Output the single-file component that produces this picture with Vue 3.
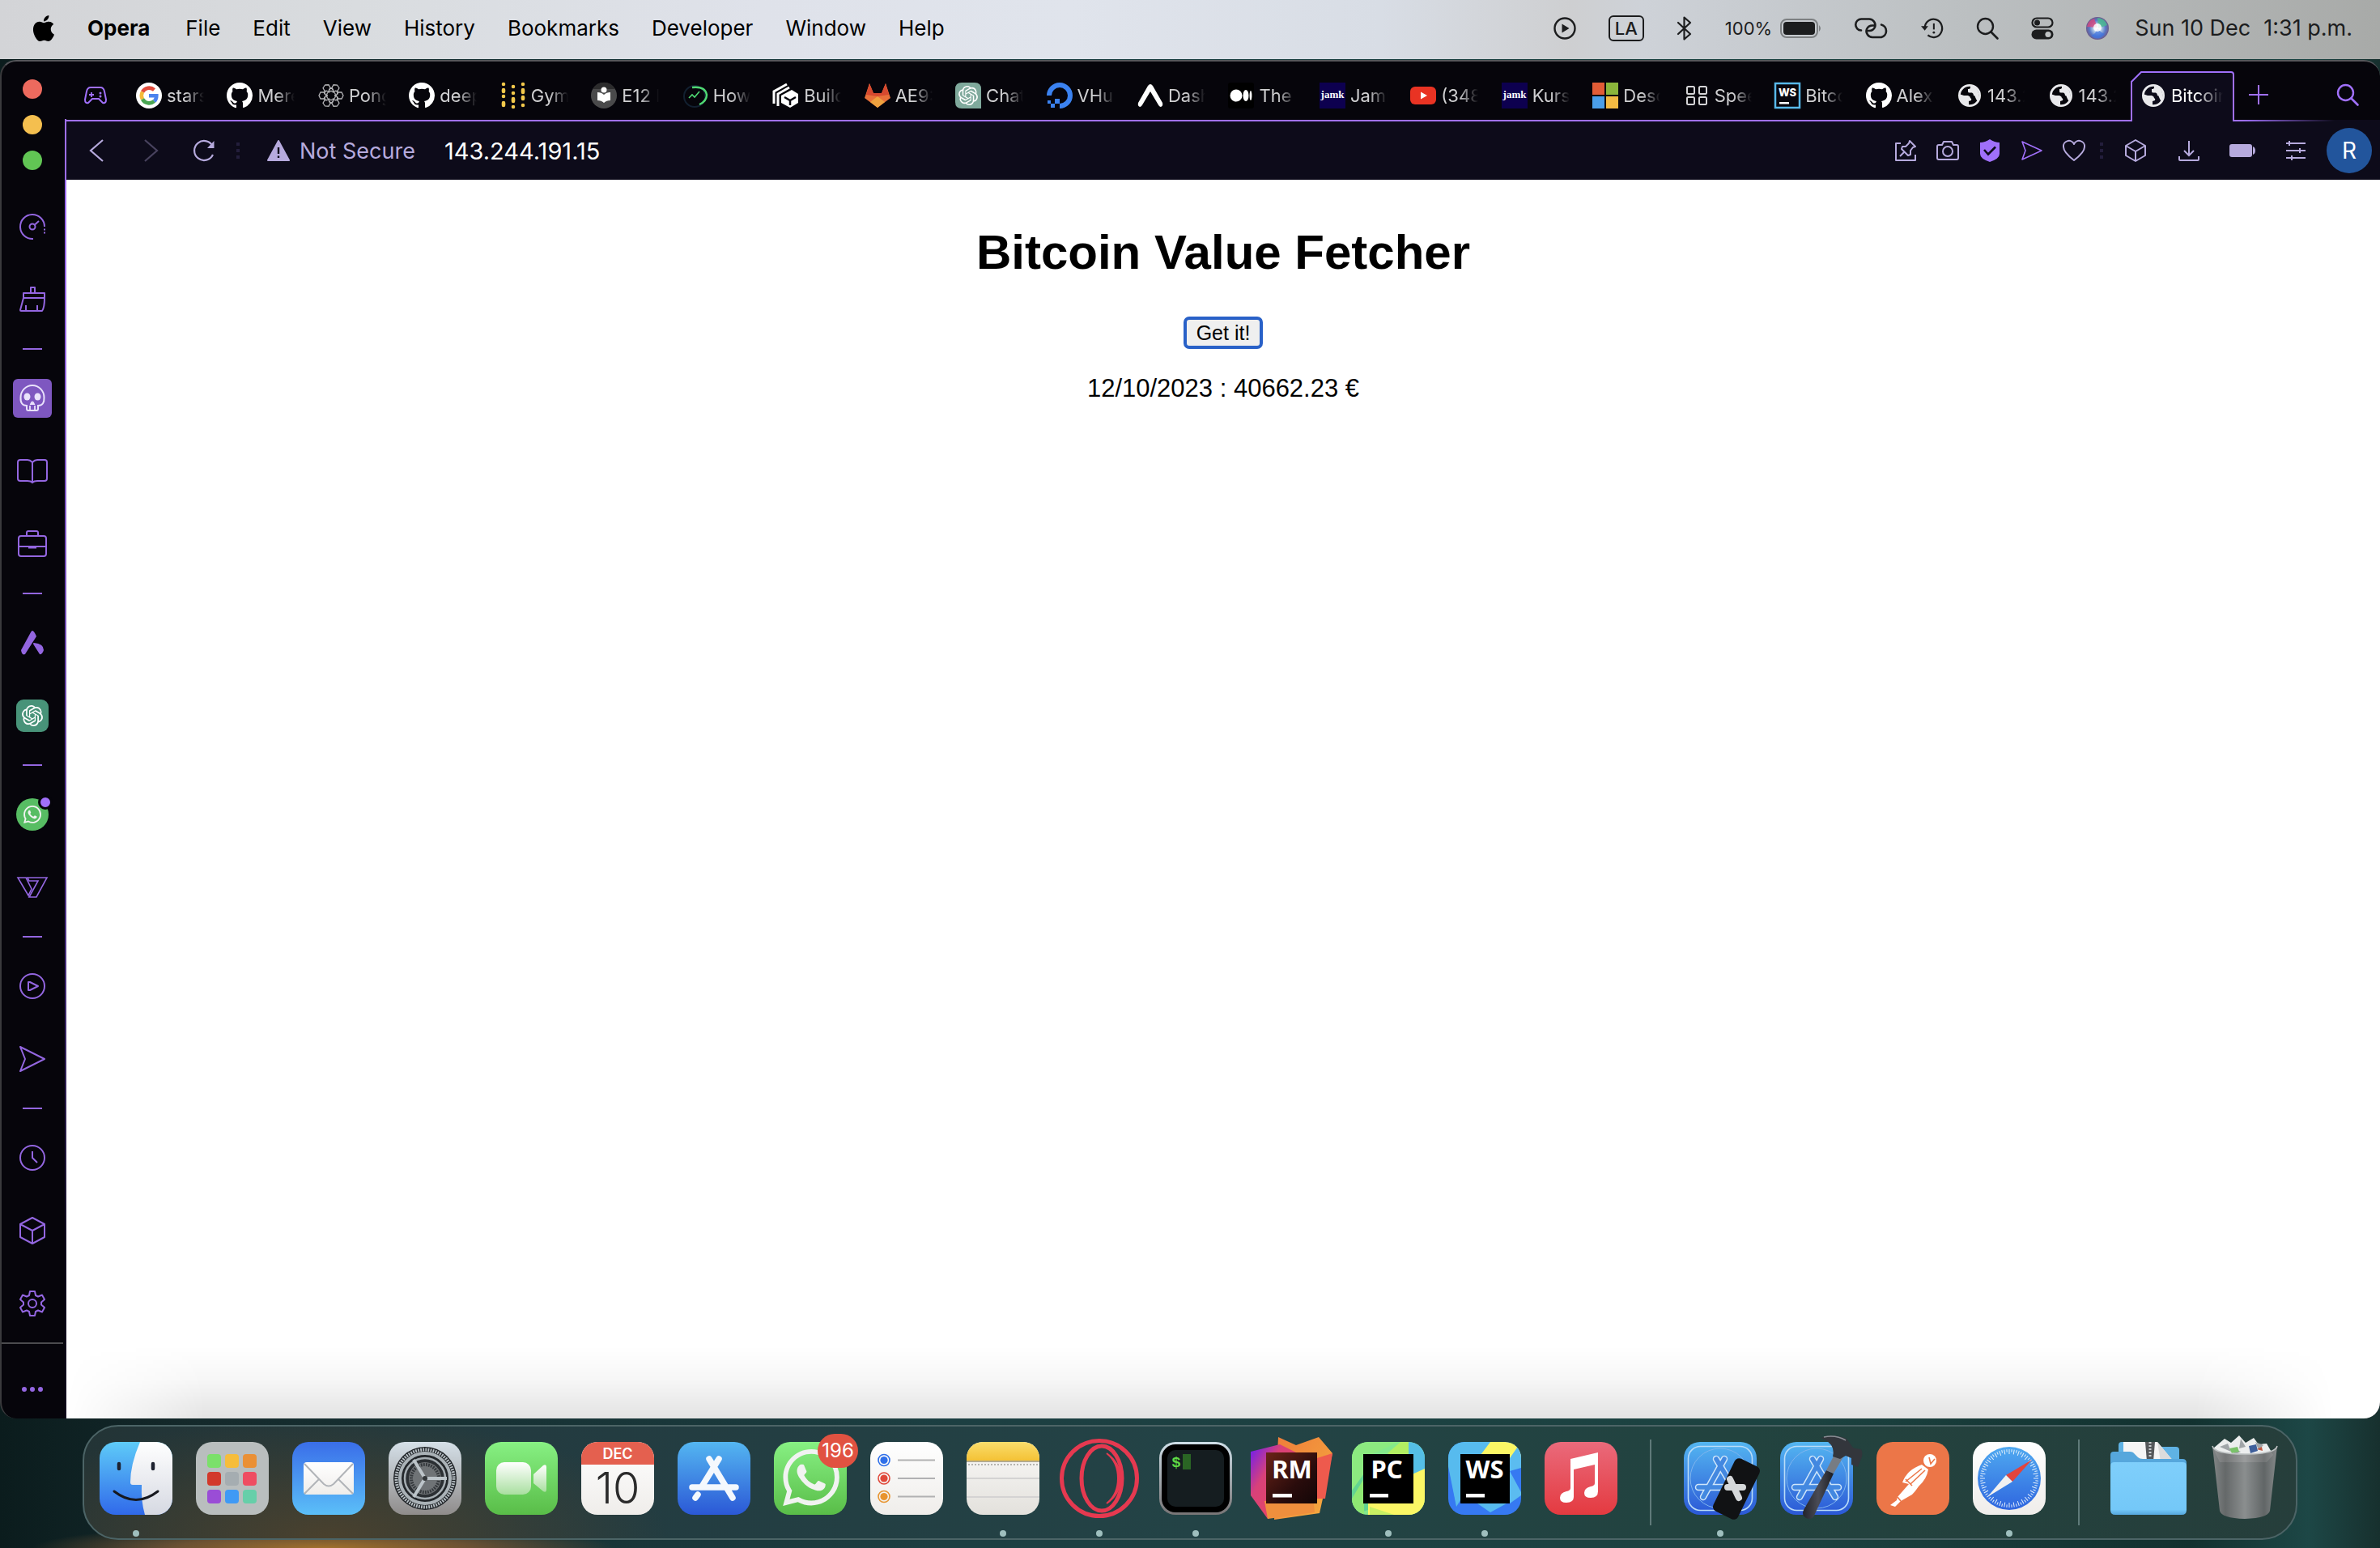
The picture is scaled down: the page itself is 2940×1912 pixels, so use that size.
<script setup>
const menus = ['File', 'Edit', 'View', 'History', 'Bookmarks', 'Developer', 'Window', 'Help']

const tabs = [
  { icon: 'google', title: 'stars' },
  { icon: 'github', title: 'Mere' },
  { icon: 'lattice', title: 'Pong' },
  { icon: 'github', title: 'deep' },
  { icon: 'gym', title: 'Gym' },
  { icon: 'reader', title: 'E12 I' },
  { icon: 'trend', title: 'How' },
  { icon: 'unity', title: 'Build' },
  { icon: 'gitlab', title: 'AE9:' },
  { icon: 'gpt-tab', title: 'Chat' },
  { icon: 'ocean', title: 'VHu' },
  { icon: 'expo', title: 'Dash' },
  { icon: 'medium', title: 'The' },
  { icon: 'jamk', title: 'Jaml' },
  { icon: 'youtube', title: '(348' },
  { icon: 'jamk', title: 'Kurs' },
  { icon: 'microsoft', title: 'Desc' },
  { icon: 'grid', title: 'Spee' },
  { icon: 'ws-tab', title: 'Bitco' },
  { icon: 'github', title: 'Alex-' },
  { icon: 'globe', title: '143.2' },
  { icon: 'globe', title: '143.2' }
]

const sans = 'Inter, sans-serif'
const noto = "'Noto Sans', sans-serif"
const marks = {
  jamk: [{ text: 'jamk', x: 16, y: 19, size: 13, weight: 700, family: "'Liberation Serif', serif", fill: '#fff' }],
  'ws-tab': [{ text: 'WS', x: 16, y: 17, size: 13, weight: 800, family: sans, fill: '#fff' }],
  calendar: [
    { text: 'DEC', x: 45, y: 21, size: 18, weight: 600, family: sans, fill: '#fff' },
    { text: '10', x: 45, y: 76, size: 54, weight: 300, family: sans, fill: '#2b2b2b' }
  ],
  terminal: [{ text: '$', x: 21, y: 31, size: 19, weight: 700, family: "'Liberation Mono', monospace", fill: '#5fd845' }],
  rubymine: [{ text: 'RM', x: 45, y: 45, size: 31, weight: 700, family: noto, fill: '#fff' }],
  pycharm: [{ text: 'PC', x: 43, y: 45, size: 31, weight: 700, family: noto, fill: '#fff' }],
  webstorm: [{ text: 'WS', x: 45, y: 45, size: 31, weight: 700, family: noto, fill: '#fff' }]
}

const sideGroups = [
  [{ icon: 'speed', label: 'Speed Dial' }, { icon: 'brush', label: 'GX Cleaner' }],
  [{ icon: 'skull', label: 'GX Mods' }, { icon: 'book', label: 'Reader' }, { icon: 'case', label: 'Workspace' }],
  [{ icon: 'aria', label: 'Aria' }, { icon: 'gpt-side', label: 'ChatGPT' }],
  [{ icon: 'wa-side', label: 'WhatsApp', badge: true }, { icon: 'veed', label: 'Vectors' }],
  [{ icon: 'player', label: 'Player' }, { icon: 'send', label: 'My Flow' }],
  [{ icon: 'clock', label: 'History' }, { icon: 'cube', label: 'Extensions' }, { icon: 'gear', label: 'Settings' }]
]

const addressTools = [
  { icon: 'pin', label: 'Pin page' },
  { icon: 'camera', label: 'Snapshot' },
  { icon: 'shield', label: 'Ad blocker', accent: true },
  { icon: 'plane', label: 'Send to My Flow', accent: true },
  { icon: 'heart', label: 'Bookmark' }
]
const browserTools = [
  { icon: 'box', label: 'Extensions' },
  { icon: 'download', label: 'Downloads' },
  { icon: 'battery', label: 'Battery saver' },
  { icon: 'sliders', label: 'Easy setup' }
]

const dock = [
  { icon: 'finder', label: 'Finder', open: true },
  { icon: 'launchpad', label: 'Launchpad' },
  { icon: 'mail', label: 'Mail' },
  { icon: 'prefs', label: 'System Settings' },
  { icon: 'facetime', label: 'FaceTime' },
  { icon: 'calendar', label: 'Calendar' },
  { icon: 'appstore', label: 'App Store' },
  { icon: 'whatsapp', label: 'WhatsApp', badge: '196' },
  { icon: 'reminders', label: 'Reminders' },
  { icon: 'notes', label: 'Notes', open: true },
  { icon: 'opera', label: 'Opera', open: true },
  { icon: 'terminal', label: 'Terminal', open: true },
  { icon: 'rubymine', label: 'RubyMine' },
  { icon: 'pycharm', label: 'PyCharm', open: true },
  { icon: 'webstorm', label: 'WebStorm', open: true },
  { icon: 'music', label: 'Music' },
  null,
  { icon: 'simulator', label: 'Simulator', open: true },
  { icon: 'xcode', label: 'Xcode' },
  { icon: 'postman', label: 'Postman' },
  { icon: 'safari', label: 'Safari', open: true },
  null,
  { icon: 'folder', label: 'Downloads' },
  { icon: 'trash', label: 'Bin' }
]

const launchColors = ['#7be06a', '#f6bd3b', '#ea9035', '#d2392b', '#a5adb1', '#ef4d62', '#9a4dd6', '#3f9af5', '#66cfa9']
const ticks = (n) => Array.from({ length: n }, (_, i) => (i * 360) / n)
</script>

<template>
  <div class="desktop">
    <svg class="sprite" width="0" height="0" aria-hidden="true">
      <defs>
        <linearGradient id="gFinder" x1="0" y1="0" x2="0" y2="1"><stop offset="0" stop-color="#5ecbf8" /><stop offset="1" stop-color="#3069ea" /></linearGradient>
        <linearGradient id="gWhite" x1="0" y1="0" x2="0" y2="1"><stop offset="0" stop-color="#fff" /><stop offset="1" stop-color="#d6d9e2" /></linearGradient>
        <linearGradient id="gPaper" x1="0" y1="0" x2="0" y2="1"><stop offset="0" stop-color="#fff" /><stop offset="1" stop-color="#efedea" /></linearGradient>
        <linearGradient id="gMail" x1="0" y1="0" x2="0" y2="1"><stop offset="0" stop-color="#3a6ee9" /><stop offset="1" stop-color="#5bbff8" /></linearGradient>
        <linearGradient id="gPrefs" x1="0" y1="0" x2="0" y2="1"><stop offset="0" stop-color="#d5e0e8" /><stop offset="1" stop-color="#8f8c8b" /></linearGradient>
        <linearGradient id="gGreen" x1="0" y1="0" x2="0" y2="1"><stop offset="0" stop-color="#87f083" /><stop offset="1" stop-color="#59bd48" /></linearGradient>
        <linearGradient id="gCam" x1="0" y1="0" x2="0" y2="1"><stop offset="0" stop-color="#fff" /><stop offset="1" stop-color="#a9dfa0" /></linearGradient>
        <linearGradient id="gStore" x1="0" y1="0" x2="0" y2="1"><stop offset="0" stop-color="#54b6f1" /><stop offset="1" stop-color="#2b58d6" /></linearGradient>
        <linearGradient id="gMusic" x1="0" y1="0" x2="0" y2="1"><stop offset="0" stop-color="#ea6a7b" /><stop offset="1" stop-color="#e43a40" /></linearGradient>
        <linearGradient id="gYellow" x1="0" y1="0" x2="0" y2="1"><stop offset="0" stop-color="#fadd6c" /><stop offset="1" stop-color="#f4c235" /></linearGradient>
        <linearGradient id="gNotes" x1="0" y1="0" x2="0" y2="1"><stop offset="0" stop-color="#faf9f8" /><stop offset="1" stop-color="#e3e1dc" /></linearGradient>
        <linearGradient id="gRuby" x1="0" y1="0" x2="1" y2="1"><stop offset="0" stop-color="#6a1cf5" /><stop offset=".35" stop-color="#d8417a" /><stop offset="1" stop-color="#ef4a55" /></linearGradient>
        <linearGradient id="gOrange" x1="0" y1="0" x2="1" y2="1"><stop offset="0" stop-color="#ee7d3a" /><stop offset="1" stop-color="#f6ad3f" /></linearGradient>
        <linearGradient id="gRm" x1="0" y1="0" x2="1" y2="1"><stop offset="0" stop-color="#6b2317" /><stop offset=".6" stop-color="#2a0c0c" /><stop offset="1" stop-color="#120607" /></linearGradient>
        <linearGradient id="gTerm" x1="0" y1="0" x2="0" y2="1"><stop offset="0" stop-color="#cfdfe8" /><stop offset="1" stop-color="#777475" /></linearGradient>
        <linearGradient id="gSafari" x1="0" y1="0" x2="0" y2="1"><stop offset="0" stop-color="#4fa9f0" /><stop offset="1" stop-color="#2f66df" /></linearGradient>
        <linearGradient id="gTrash" x1="0" y1="0" x2="1" y2="0"><stop offset="0" stop-color="#8b8d8e" /><stop offset=".2" stop-color="#6a6c6d" /><stop offset=".5" stop-color="#939596" /><stop offset=".8" stop-color="#66696a" /><stop offset="1" stop-color="#8f9192" /></linearGradient>
        <linearGradient id="gFolder" x1="0" y1="0" x2="0" y2="1"><stop offset="0" stop-color="#7fcffb" /><stop offset=".9" stop-color="#74c8f8" /><stop offset="1" stop-color="#55a6dc" /></linearGradient>
        <linearGradient id="gHammer" x1="0" y1="0" x2="1" y2="0"><stop offset="0" stop-color="#22232a" /><stop offset=".5" stop-color="#4a4c56" /><stop offset="1" stop-color="#1c1d22" /></linearGradient>
        <radialGradient id="gSiri"><stop offset="0" stop-color="#fff" /><stop offset=".35" stop-color="#b9cfe8" /><stop offset=".7" stop-color="#5a7bc8" /><stop offset="1" stop-color="#6a5a8c" /></radialGradient>
        <clipPath id="cTile"><rect width="90" height="90" rx="20" /></clipPath>
      </defs>

      <!-- menu bar -->
      <symbol id="apple" viewBox="0 0 24 24"><path d="M12.152 6.896c-.948 0-2.415-1.078-3.960-1.040-2.040.027-3.910 1.183-4.961 3.014-2.117 3.675-.546 9.103 1.519 12.090 1.013 1.454 2.208 3.090 3.792 3.039 1.520-.065 2.090-.987 3.935-.987 1.831 0 2.350.987 3.960.948 1.637-.026 2.676-1.480 3.676-2.948 1.156-1.688 1.636-3.325 1.662-3.415-.039-.013-3.182-1.221-3.220-4.857-.026-3.040 2.480-4.494 2.597-4.559-1.429-2.090-3.623-2.324-4.390-2.376-2-.156-3.675 1.090-4.610 1.090zM15.530 3.830c.843-1.012 1.400-2.427 1.245-3.830-1.207.052-2.662.805-3.532 1.818-.780.896-1.454 2.338-1.273 3.714 1.338.104 2.715-.688 3.559-1.701" /></symbol>
      <symbol id="playing" viewBox="0 0 28 28"><circle cx="14" cy="14" r="12.500" fill="none" stroke="currentColor" stroke-width="2.400" /><path d="M10.500 8.500v11l9-5.500z" fill="currentColor" /></symbol>
      <symbol id="bluetooth" viewBox="0 0 20 30"><path d="M2 8l15 14-7.500 6.500V1.500L17 8 2 22" fill="none" stroke="currentColor" stroke-width="2.200" stroke-linejoin="round" stroke-linecap="round" /></symbol>
      <symbol id="charge" viewBox="0 0 52 24"><rect x="1" y="1" width="45" height="22" rx="7" fill="none" stroke="#7d8082" stroke-width="2" /><rect x="4" y="4" width="39" height="16" rx="4" fill="currentColor" /><path d="M48 8q4 4 0 8z" fill="#7d8082" /></symbol>
      <symbol id="link" viewBox="0 0 42 26"><g fill="none" stroke="currentColor" stroke-width="2.600" stroke-linecap="round"><path d="M8 15.500A7 7 0 0 1 8.500 1.500H18a7.500 7.500 0 0 1 7 10q-2 4.500-7 4.500h-1" /><path d="M33 8.500a8 8 0 0 1 0 15.500H22a7.500 7.500 0 0 1-7-10q2-4.500 7-4.500h2" /></g></symbol>
      <symbol id="timemachine" viewBox="0 0 30 28"><path d="M5 13A11.500 12 0 1 1 9 23" fill="none" stroke="currentColor" stroke-width="2.400" /><path d="M0 11h9.500L5 17z" fill="currentColor" /><path d="M17 7.500v8" stroke="currentColor" stroke-width="2.200" /><circle cx="17" cy="19.500" r="1.500" fill="currentColor" /></symbol>
      <symbol id="search" viewBox="0 0 28 28"><circle cx="11.500" cy="11.500" r="9.500" fill="none" stroke="currentColor" stroke-width="2.400" /><path d="M18.500 18.500l8 8" stroke="currentColor" stroke-width="2.600" stroke-linecap="round" /></symbol>
      <symbol id="controls" viewBox="0 0 28 28"><rect x="1.500" y="1.500" width="25" height="11" rx="5.500" fill="none" stroke="currentColor" stroke-width="2.200" /><circle cx="7.500" cy="7" r="3.500" fill="currentColor" /><rect x="0.500" y="15.500" width="27" height="12" rx="6" fill="currentColor" /><circle cx="21" cy="21.500" r="3.600" fill="#bfc2c3" /></symbol>
      <symbol id="siri" viewBox="0 0 28 28"><circle cx="14" cy="14" r="14" fill="url(#gSiri)" /><path d="M1 12A13 13 0 0 1 10 2l4 11z" fill="#d8467c" opacity=".8" /><path d="M14 1a13 13 0 0 1 12 9l-11 4z" fill="#4ab890" opacity=".85" /><path d="M6 23q6-2 8-9 5 6 9 7-8 10-17 2" fill="#3f74e0" opacity=".7" /><circle cx="14" cy="13" r="5" fill="#fff" opacity=".85" /></symbol>

      <!-- tab favicons -->
      <symbol id="gamepad" viewBox="0 0 28 24"><path d="M8 2h12q4 0 5 5l2 10q0 5-4 4l-5-5h-8l-5 5q-4 1-4-4L3 7q1-5 5-5z" fill="none" stroke="currentColor" stroke-width="2" stroke-linejoin="round" /><path d="M9 8v6M6 11h6" stroke="currentColor" stroke-width="1.800" /><circle cx="20" cy="9" r="1.500" fill="currentColor" /><circle cx="20" cy="13" r="1.500" fill="currentColor" /></symbol>
      <symbol id="google" viewBox="0 0 32 32"><circle cx="16" cy="16" r="16" fill="#fff" /><g fill="none" stroke-width="4.600"><path d="M8 11.500A9.500 9.500 0 0 1 22.500 9" stroke="#e14b3c" /><path d="M8 20.500a9.500 9.500 0 0 1 0-9" stroke="#f4bb3a" /><path d="M22.500 23A9.500 9.500 0 0 1 8 20.500" stroke="#4aa653" /><path d="M16 16.200h9.300q0 4.500-2.800 6.800" stroke="#4b82ee" /></g></symbol>
      <symbol id="github" viewBox="0 0 16 16"><path fill="#fff" d="M8 0C3.580 0 0 3.580 0 8c0 3.540 2.290 6.530 5.470 7.590.4.070.55-.170.55-.380 0-.190-.010-.820-.010-1.490-2.010.370-2.530-.490-2.690-.940-.090-.230-.480-.980-.820-1.170-.280-.150-.680-.520-.010-.530.630-.010 1.080.580 1.230.820.720 1.210 1.870.870 2.330.660.070-.520.280-.870.510-1.070-1.780-.200-3.640-.890-3.640-3.950 0-.870.310-1.590.820-2.150-.080-.200-.360-1.020.080-2.120 0 0 .670-.210 2.200.820.640-.180 1.320-.270 2-.270s1.360.090 2 .270c1.530-1.040 2.200-.820 2.200-.820.440 1.100.160 1.920.080 2.120.510.560.820 1.270.820 2.150 0 3.070-1.870 3.750-3.650 3.950.290.250.540.730.540 1.480 0 1.070-.010 1.930-.010 2.200 0 .210.150.460.550.380A8.013 8.013 0 0016 8c0-4.420-3.580-8-8-8z" /></symbol>
      <symbol id="lattice" viewBox="0 0 32 32"><g fill="none" stroke="#b5b5b8" stroke-width="1.300"><circle cx="16" cy="16" r="5.500" /><path v-for="a in ticks(6)" :key="a" :transform="`rotate(${a + 30} 16 16)`" d="M16 1l4 2v4l-4 3-4-3V3zM12 7l-2 4M20 7l2 4M16 10v2" /></g></symbol>
      <symbol id="gym" viewBox="0 0 32 32"><g stroke="#f2c84b" stroke-linecap="round" stroke-width="4.600"><path d="M4 2v0M4 9v2M4 17v0M4 25v3M16 5v0M16 13v0M16 20v3M16 30v0M28 2v0M28 9v3M28 18v2M28 28v0" /></g></symbol>
      <symbol id="reader" viewBox="0 0 32 32"><circle cx="16" cy="16" r="16" fill="#4a4a4b" /><path d="M2 8A16 16 0 0 1 30 8z" fill="#2c2c2d" /><circle cx="16" cy="9" r="3.500" fill="#fff" /><path d="M8 12q5 0 8 3 3-3 8-3v10q-5 0-8 3-3-3-8-3z" fill="#fff" /></symbol>
      <symbol id="trend" viewBox="0 0 32 32"><circle cx="15" cy="17" r="13" fill="none" stroke="#122030" stroke-width="2" /><path d="M12 6q16-2 18 9 0 8-9 12" fill="none" stroke="#4fd873" stroke-width="2.400" /><path d="M8 19l4-4 3 3 6-7" fill="none" stroke="#4fd873" stroke-width="1.600" /></symbol>
      <symbol id="unity" viewBox="0 0 32 32"><path d="M1 26V11L17 2M6 29V14L20 6" fill="none" stroke="#fff" stroke-width="3" /><path d="M10 16l13-7 8 5v11l-10 6-11-6z" fill="#fff" /><path d="M14 18l7 4 7-4M21 22v6" stroke="#07060d" stroke-width="2.500" fill="none" /></symbol>
      <symbol id="gitlab" viewBox="0 0 32 32"><path d="M16 31L0 19 6 1l5 12h10l5-12 6 18z" fill="#e8713a" /><path d="M6 1l5 12h10l5-12 4 14-14 2L2 15z" fill="#d6492f" /><path d="M16 31l-9-7 9-7 9 7z" fill="#efa23f" /></symbol>
      <symbol id="knot" viewBox="0 0 24 24"><path fill="#fff" d="M22.282 9.821a5.985 5.985 0 0 0-.516-4.911 6.046 6.046 0 0 0-6.510-2.900A6.065 6.065 0 0 0 4.981 4.182a5.985 5.985 0 0 0-3.998 2.900 6.046 6.046 0 0 0 .743 7.097 5.980 5.980 0 0 0 .511 4.911 6.051 6.051 0 0 0 6.515 2.900A5.985 5.985 0 0 0 13.260 24a6.056 6.056 0 0 0 5.772-4.206 5.989 5.989 0 0 0 3.998-2.900 6.056 6.056 0 0 0-.748-7.073zm-9.022 12.608a4.476 4.476 0 0 1-2.876-1.041l.142-.080 4.778-2.758a.795.795 0 0 0 .393-.681v-6.737l2.020 1.169a.071.071 0 0 1 .038.052v5.583a4.504 4.504 0 0 1-4.495 4.494zm-9.661-4.125a4.471 4.471 0 0 1-.535-3.014l.142.085 4.783 2.758a.771.771 0 0 0 .781 0l5.843-3.369v2.332a.080.080 0 0 1-.033.062L9.740 19.950a4.499 4.499 0 0 1-6.141-1.646zM2.341 7.896a4.485 4.485 0 0 1 2.366-1.973V11.600a.766.766 0 0 0 .388.677l5.814 3.354-2.020 1.169a.076.076 0 0 1-.071 0l-4.830-2.787A4.504 4.504 0 0 1 2.341 7.872zm16.596 3.856L13.104 8.364 15.119 7.200a.076.076 0 0 1 .071 0l4.830 2.791a4.494 4.494 0 0 1-.677 8.104v-5.677a.790.790 0 0 0-.407-.667zm2.011-3.023l-.142-.085-4.774-2.782a.776.776 0 0 0-.785 0L9.409 9.230V6.897a.066.066 0 0 1 .028-.062l4.830-2.787a4.499 4.499 0 0 1 6.680 4.660zM8.307 12.863l-2.020-1.164a.080.080 0 0 1-.038-.057V6.074a4.499 4.499 0 0 1 7.376-3.454l-.142.081L8.704 5.459a.795.795 0 0 0-.393.681zm1.098-2.365l2.602-1.500 2.607 1.500v2.999l-2.597 1.500-2.607-1.500Z" /></symbol>
      <symbol id="gpt-tab" viewBox="0 0 32 32"><path d="M8 0h16q8 0 8 8v24H8q-8 0-8-8V8q0-8 8-8z" fill="#7fa99c" /><use href="#knot" x="4" y="4" width="24" height="24" /></symbol>
      <symbol id="ocean" viewBox="0 0 32 32"><path d="M3 16A13 13 0 1 1 16 29" fill="none" stroke="#3b82f0" stroke-width="6" /><path d="M10 20h6v6h-6zM5 26h5v5H5zM1 22h4v4H1z" fill="#3b82f0" /></symbol>
      <symbol id="expo" viewBox="0 0 32 32"><path d="M13 4q3-4 6 0l12 21q1 4-2 5-2 0-4-4L16 11 7 26q-2 4-4 4-3-1-2-5z" fill="#fff" /></symbol>
      <symbol id="medium" viewBox="0 0 32 32"><rect width="32" height="32" rx="3" fill="#000" /><circle cx="10" cy="16" r="7.500" fill="#fff" /><ellipse cx="22" cy="16" rx="3.500" ry="7" fill="#fff" /><ellipse cx="28" cy="16" rx="1.400" ry="6" fill="#fff" /></symbol>
      <symbol id="jamk" viewBox="0 0 32 32"><rect width="32" height="32" fill="#0d004f" /></symbol>
      <symbol id="youtube" viewBox="0 0 32 32"><rect y="5" width="32" height="22" rx="6" fill="#e93323" /><path d="M13 11.500v9l8-4.500z" fill="#fff" /></symbol>
      <symbol id="microsoft" viewBox="0 0 32 32"><path d="M0 0h15v15H0z" fill="#e15c36" /><path d="M17 0h15v15H17z" fill="#8bb63b" /><path d="M0 17h15v15H0z" fill="#4a9ee8" /><path d="M17 17h15v15H17z" fill="#f3bb43" /></symbol>
      <symbol id="grid" viewBox="0 0 32 32"><g fill="none" stroke="#d4d4d6" stroke-width="2"><rect x="4" y="5" width="9" height="9" rx="1.500" /><rect x="19" y="5" width="9" height="9" rx="1.500" /><rect x="4" y="18" width="9" height="9" rx="1.500" /><rect x="19" y="18" width="9" height="9" rx="1.500" /></g></symbol>
      <symbol id="ws-tab" viewBox="0 0 32 32"><rect x="1" y="1" width="30" height="30" fill="#07060d" stroke="#58b9ea" stroke-width="2.500" /><path d="M6 24h12v2.500H6z" fill="#fff" /></symbol>
      <symbol id="globe" viewBox="0 0 32 32"><circle cx="16" cy="16" r="12.600" fill="none" stroke="#e9e9ec" stroke-width="2.800" /><path d="M17 3v3q0 2-3 2v3q0 1.500 2 1.500h3q2 .500 2 3.500 2 0 2 2 1 3 3 5A14 14 0 0 0 17 3z" fill="#e9e9ec" /><path d="M3 14l6 2h5q3 1 3 3 2 1 1 3l-3 1v6A13 13 0 0 1 3 14z" fill="#e9e9ec" /></symbol>
      <symbol id="plus" viewBox="0 0 24 24"><path d="M12 0v24M0 12h24" stroke="currentColor" stroke-width="2" /></symbol>

      <!-- toolbar -->
      <symbol id="back" viewBox="0 0 28 28"><path d="M21 1L6 14l15 13" fill="none" stroke="currentColor" stroke-width="2.200" /></symbol>
      <symbol id="forward" viewBox="0 0 28 28"><path d="M7 1l15 13L7 27" fill="none" stroke="currentColor" stroke-width="2.200" /></symbol>
      <symbol id="reload" viewBox="0 0 28 28"><path d="M25 19A12 12 0 1 1 25 9" fill="none" stroke="currentColor" stroke-width="2.200" /><path d="M26.500 2v9H18z" fill="currentColor" /></symbol>
      <symbol id="warn" viewBox="0 0 28 26"><path d="M14 1l13 24H1z" fill="currentColor" stroke="currentColor" stroke-width="2" stroke-linejoin="round" /><path d="M14 9v8M14 19.500v2.500" stroke="#0d0b1a" stroke-width="2.400" /></symbol>
      <symbol id="pin" viewBox="0 0 28 28"><g fill="none" stroke="currentColor" stroke-width="2" stroke-linejoin="round"><path d="M8 5H2v21h24v-7" /><path d="M19 2l7 7-3 1-3 4v5l-3 1-8-8 1-3h4l4-4zM13 15l-6 6" /></g></symbol>
      <symbol id="camera" viewBox="0 0 28 28"><g fill="none" stroke="currentColor" stroke-width="2" stroke-linejoin="round"><path d="M3 7h4l2-4h10l2 4h4q2 0 2 2v14q0 2-2 2H3q-2 0-2-2V9q0-2 2-2z" /><circle cx="14" cy="15" r="6" /></g></symbol>
      <symbol id="shield" viewBox="0 0 28 28"><path d="M14 0q6 4 12 4v14q0 6-12 10Q2 24 2 18V4q6 0 12-4z" fill="currentColor" /><path d="M7 13l5 5.500L21 9.500" fill="none" stroke="#0d0b1a" stroke-width="2.600" /></symbol>
      <symbol id="plane" viewBox="0 0 28 28"><path d="M2 3l24 11L2 25l4-11z" fill="none" stroke="currentColor" stroke-width="1.600" stroke-linejoin="round" /></symbol>
      <symbol id="heart" viewBox="0 0 28 28"><path d="M14 26Q1 16 1 9.500A6.800 6.800 0 0 1 14 6a6.800 6.800 0 0 1 13 3.500Q27 16 14 26z" fill="none" stroke="currentColor" stroke-width="2" stroke-linejoin="round" /></symbol>
      <symbol id="box" viewBox="0 0 32 32"><g fill="none" stroke="currentColor" stroke-width="2" stroke-linejoin="round"><path d="M16 3l12 7v12l-12 7-12-7V10zM4 10l12 7 12-7M16 17v12" /></g></symbol>
      <symbol id="download" viewBox="0 0 32 32"><path d="M16 4v18M10 16l6 6 6-6M4 23v4q0 1 1 1h22q1 0 1-1v-4" fill="none" stroke="currentColor" stroke-width="2" /></symbol>
      <symbol id="battery" viewBox="0 0 32 28"><rect x="0" y="6" width="28" height="16" rx="3" fill="currentColor" /><path d="M29 9q3 1 3 5t-3 5z" fill="currentColor" /></symbol>
      <symbol id="sliders" viewBox="0 0 32 32"><path d="M4 7h24M4 16h24M4 25h24M8 4v6M21 13v6M11 22v6" fill="none" stroke="currentColor" stroke-width="2" /></symbol>

      <!-- sidebar -->
      <symbol id="speed" viewBox="0 0 40 40"><g fill="none" stroke="currentColor" stroke-width="2"><path d="M21 35A15 15 0 1 1 35 20" /><circle cx="20" cy="20" r="3.500" /><path d="M23 17.500l5-4.500M35 22.500v2M35 26.500v2" /></g></symbol>
      <symbol id="brush" viewBox="0 0 40 40"><g fill="none" stroke="currentColor" stroke-width="2" stroke-linejoin="round"><path d="M18 12V5h5v7M9 18v-6h26v6zM9 18L5 33q0 1 1 1h26q3-4 3-16M12 33v-6M26 33v-6" /></g></symbol>
      <symbol id="skull" viewBox="0 0 40 40"><rect x="-4" y="-4" width="48" height="48" rx="6" fill="#7e57c0" /><path d="M13 33v-4q-8 0-7.500-10A14.500 15 0 0 1 34.500 19q.500 10-7.500 10v4q0 2-2 2H15q-2 0-2-2z" fill="none" stroke="#e9e2fb" stroke-width="2" /><ellipse cx="13.500" cy="18" rx="4" ry="4.600" fill="#e9e2fb" /><ellipse cx="26.500" cy="18" rx="4" ry="4.600" fill="#e9e2fb" /><path d="M18 27q2-5 4 0zM17 34v-5M23 34v-5" fill="none" stroke="#e9e2fb" stroke-width="1.800" /></symbol>
      <symbol id="book" viewBox="0 0 40 40"><path d="M20 9q-3-3-6-3H5q-3 0-3 3v20q0 3 3 3h9q4 0 6 2 2-2 6-2h9q3 0 3-3V9q0-3-3-3h-9q-3 0-6 3zv25" fill="none" stroke="currentColor" stroke-width="2" /></symbol>
      <symbol id="case" viewBox="0 0 40 40"><g fill="none" stroke="currentColor" stroke-width="2"><rect x="3" y="10" width="34" height="25" rx="3" /><path d="M13 10V6q0-2 2-2h10q2 0 2 2v4M3 23h34" /></g><path d="M15 24h10v1.500H15z" fill="currentColor" /></symbol>
      <symbol id="aria" viewBox="0 0 40 40"><path d="M20 5q2 0 5 7L11 34q-4 2-5-5L18 7q1-2 2-2zM22 20q12 1 12 9-2 6-5 5l-7-11q-2-3 0-3z" fill="currentColor" /></symbol>
      <symbol id="gpt-side" viewBox="0 0 40 40"><rect width="40" height="40" rx="9" fill="#489379" /><use href="#knot" x="7" y="7" width="26" height="26" /></symbol>
      <symbol id="wa" viewBox="0 0 24 24"><path fill="#f1f3f1" d="M17.472 14.382c-.297-.149-1.758-.867-2.030-.967-.273-.099-.471-.148-.670.150-.197.297-.767.966-.940 1.164-.173.199-.347.223-.644.075-.297-.150-1.255-.463-2.390-1.475-.883-.788-1.480-1.761-1.653-2.059-.173-.297-.018-.458.130-.606.134-.133.298-.347.446-.520.149-.174.198-.298.298-.497.099-.198.050-.371-.025-.520-.075-.149-.669-1.612-.916-2.207-.242-.579-.487-.500-.669-.510-.173-.008-.371-.010-.570-.010-.198 0-.520.074-.792.372-.272.297-1.040 1.016-1.040 2.479 0 1.462 1.065 2.875 1.213 3.074.149.198 2.096 3.200 5.077 4.487.709.306 1.262.489 1.694.625.712.227 1.360.195 1.871.118.571-.085 1.758-.719 2.006-1.413.248-.694.248-1.289.173-1.413-.074-.124-.272-.198-.570-.347m-5.421 7.403h-.004a9.870 9.870 0 01-5.031-1.378l-.361-.214-3.741.982.998-3.648-.235-.374a9.860 9.860 0 01-1.510-5.260c.001-5.450 4.436-9.884 9.888-9.884 2.640 0 5.122 1.030 6.988 2.898a9.825 9.825 0 012.893 6.994c-.003 5.450-4.437 9.884-9.885 9.884m8.413-18.297A11.815 11.815 0 0012.050 0C5.495 0 .160 5.335.157 11.892c0 2.096.547 4.142 1.588 5.945L.057 24l6.305-1.654a11.882 11.882 0 005.683 1.448h.005c6.554 0 11.890-5.335 11.893-11.893a11.821 11.821 0 00-3.480-8.413z" /></symbol>
      <symbol id="wa-side" viewBox="0 0 40 40"><circle cx="20" cy="20" r="20" fill="#57bd63" /><use href="#wa" x="9" y="9" width="22" height="22" /></symbol>
      <symbol id="veed" viewBox="0 0 40 40"><path d="M2 8h10l7 14-4 8zM14 8h24L25 32h-9l11-20H16zM19 22l-4 8" fill="none" stroke="currentColor" stroke-width="1.600" /></symbol>
      <symbol id="player" viewBox="0 0 40 40"><g fill="none" stroke="currentColor" stroke-width="2" stroke-linejoin="round"><circle cx="20" cy="20" r="15" /><path d="M15 15v10l2 0 10-5-10-5z" /></g></symbol>
      <symbol id="send" viewBox="0 0 40 40"><path d="M5 5l30 15L5 35l6-15z" fill="none" stroke="currentColor" stroke-width="2" stroke-linejoin="round" /></symbol>
      <symbol id="clock" viewBox="0 0 40 40"><g fill="none" stroke="currentColor" stroke-width="2"><circle cx="20" cy="20" r="15" /><path d="M20 12v8l6 6" /></g></symbol>
      <symbol id="cube" viewBox="0 0 40 40"><g fill="none" stroke="currentColor" stroke-width="2" stroke-linejoin="round"><path d="M20 4l15 8v16l-15 8-15-8V12zM5 12l15 8 15-8M20 20v16" /></g></symbol>
      <symbol id="gear" viewBox="0 0 40 40"><g fill="none" stroke="currentColor" stroke-width="2" stroke-linejoin="round"><circle cx="20" cy="20" r="5" /><path d="M17 5h6l1 5 3 1.500 5-2 3 5.500-4 3.500v3l4 3.500-3 5.500-5-2-3 1.500-1 5h-6l-1-5-3-1.500-5 2L5 25l4-3.500v-3L5 15l3-5.500 5 2 3-1.500z" /></g></symbol>

      <!-- dock -->
      <symbol id="finder" viewBox="0 0 90 90"><g clip-path="url(#cTile)"><rect width="90" height="90" fill="url(#gFinder)" /><path d="M50 0Q38 28 38 50q0 3 3 3h11q-1 20 4 37h34V0z" fill="url(#gWhite)" /></g><path d="M24 27v6M66 27v6" stroke="#1d2230" stroke-width="4.500" stroke-linecap="round" /><path d="M18 61q27 21 54 0" fill="none" stroke="#16181e" stroke-width="3" stroke-linecap="round" /></symbol>
      <symbol id="launchpad" viewBox="0 0 90 90"><rect width="90" height="90" rx="20" fill="#b9bebe" /><rect v-for="(c, i) in launchColors" :key="c" :x="14 + (i % 3) * 22" :y="15 + Math.floor(i / 3) * 22" width="17" height="17" rx="4" :fill="c" /></symbol>
      <symbol id="mail" viewBox="0 0 90 90"><rect width="90" height="90" rx="20" fill="url(#gMail)" /><rect x="14" y="25" width="62" height="40" rx="4" fill="url(#gPaper)" /><path d="M15 27l24 25q6 5 12 0l24-25M15 64l18-18M75 64L57 46" fill="none" stroke="#b1b4b8" stroke-width="2" /></symbol>
      <symbol id="prefs" viewBox="0 0 90 90"><rect width="90" height="90" rx="20" fill="url(#gPrefs)" /><circle cx="45" cy="45" r="39" fill="#22262a" /><circle cx="45" cy="45" r="35.500" fill="none" stroke="#b7bfc4" stroke-width="4" stroke-dasharray="1.800 1.300" /><circle cx="45" cy="45" r="31" fill="none" stroke="#aab2b7" stroke-width="4" /><circle cx="45" cy="45" r="27" fill="#2b2f33" /><circle cx="45" cy="45" r="20" fill="#6f7376" /><circle cx="45" cy="45" r="17" fill="none" stroke="#34383c" stroke-width="4" stroke-dasharray="1.800 1.300" /><circle cx="45" cy="45" r="25" fill="none" stroke="#a5adb2" stroke-width="2.500" /><path d="M45 45h27M45 45L31 22M45 45L31 68" stroke="#bcc4c9" stroke-width="4" /><circle cx="45" cy="45" r="3" fill="#33373a" /></symbol>
      <symbol id="facetime" viewBox="0 0 90 90"><rect width="90" height="90" rx="20" fill="url(#gGreen)" /><rect x="14" y="25" width="43" height="40" rx="10" fill="url(#gCam)" /><path d="M60 40l12-11q4-2 4 2v28q0 4-4 2L60 51z" fill="url(#gCam)" /></symbol>
      <symbol id="calendar" viewBox="0 0 90 90"><g clip-path="url(#cTile)"><rect width="90" height="90" fill="url(#gPaper)" /><rect width="90" height="28" fill="#e4604f" /></g></symbol>
      <symbol id="appstore" viewBox="0 0 90 90"><rect width="90" height="90" rx="20" fill="url(#gStore)" /><g stroke="#f4f8fd" stroke-width="7.500" stroke-linecap="round"><path d="M51 21L30 55M39 21l29 48M18 56h54M25 65l-3 4" /></g></symbol>
      <symbol id="whatsapp" viewBox="0 0 90 90"><rect width="90" height="90" rx="20" fill="url(#gGreen)" /><use href="#wa" x="11" y="9" width="70" height="70" /></symbol>
      <symbol id="reminders" viewBox="0 0 90 90"><rect width="90" height="90" rx="20" fill="url(#gPaper)" /><g v-for="(c, i) in ['#2f6fe9', '#e0483a', '#e8942f']" :key="c"><circle cx="17" :cy="22.500 + i * 22.500" r="7" fill="none" :stroke="c" stroke-width="1.600" /><circle cx="17" :cy="22.500 + i * 22.500" r="4.600" :fill="c" /><path :d="`M34 ${22.500 + i * 22.500}h46`" stroke="#b1b1b2" stroke-width="2" /></g></symbol>
      <symbol id="notes" viewBox="0 0 90 90"><g clip-path="url(#cTile)"><rect width="90" height="90" fill="url(#gNotes)" /><rect width="90" height="23" fill="url(#gYellow)" /><path d="M0 24h90" stroke="#b3a98c" stroke-width="2" /><path d="M2 28h88" stroke="#b5b4b0" stroke-width="2" stroke-dasharray="2 2" /><path d="M0 45h90M0 68h90" stroke="#d4d3d3" stroke-width="2" /></g></symbol>
      <symbol id="opera" viewBox="0 0 90 90"><ellipse cx="45" cy="45" rx="46.500" ry="46.500" fill="none" stroke="#e63950" stroke-width="5" /><ellipse cx="48" cy="45" rx="25" ry="40" fill="none" stroke="#e63950" stroke-width="5" /><path d="M54 14q17 12 17 31T54 76q14-11 14-31T54 14z" fill="#e63950" stroke="#e63950" stroke-width="2" /></symbol>
      <symbol id="terminal" viewBox="0 0 90 90"><rect width="90" height="90" rx="20" fill="url(#gTerm)" /><rect x="3" y="3" width="84" height="84" rx="17" fill="#000" /><rect x="10" y="10" width="70" height="70" rx="10" fill="#151d20" /><path d="M29 15h10v19H29z" fill="#2a6524" /></symbol>
      <symbol id="rubymine" viewBox="0 0 90 90"><path d="M28 -6l22 10 28-10 17 20-12 56-4 18-56 8z" fill="url(#gOrange)" /><path d="M95 14L86 70H66L60 25z" fill="#ee5a4d" /><path d="M-6 12L30 3l20 10v60L15 95-6 66z" fill="url(#gRuby)" /><path d="M15 95l-4-22 60-5 2 19z" fill="#ef8f3d" /><rect x="13" y="13" width="63" height="63" fill="url(#gRm)" /><path d="M21 64h24v4.500H21z" fill="#fff" /></symbol>
      <symbol id="pycharm" viewBox="0 0 90 90"><g clip-path="url(#cTile)"><rect width="90" height="90" fill="#84e88c" /><path d="M0 60L14 42V20l44-20H0z" fill="#8cea80" /><path d="M44 14L60 0h12v30z" fill="#b2ee62" /><path d="M70 0h20v34L70 42z" fill="#55bfe6" /><path d="M0 60l20-28v52L0 90z" fill="#62d492" /><path d="M0 70l15-25v45H0z" fill="#8fe873" /><path d="M90 33v57H20V75l50-33z" fill="#fbf765" /><path d="M22 80l30 10H22z" fill="#c8f063" /></g><rect x="14" y="15" width="62" height="61" fill="#000" /><path d="M22 64h23v4.500H22z" fill="#fff" /></symbol>
      <symbol id="webstorm" viewBox="0 0 90 90"><g clip-path="url(#cTile)"><rect width="90" height="90" fill="#3679f2" /><path d="M0 0h60L10 80 0 30z" fill="#57bbee" /><path d="M52 0h38v28L40 16z" fill="#fbf765" /><path d="M90 0v66L76 76V20z" fill="#5bbcf0" /><path d="M90 32v30L76 36z" fill="#3679f2" /><path d="M36 76h36L52 87z" fill="#57bbee" /></g><rect x="15" y="15" width="61" height="61" fill="#000" /><path d="M22 64h23v4.500H22z" fill="#fff" /></symbol>
      <symbol id="music" viewBox="0 0 90 90"><rect width="90" height="90" rx="20" fill="url(#gMusic)" /><path d="M32 21l34-8v48q0 8-9 8-8 0-8-6 0-6 8-8 5-1 5-4V28l-26 6v34q0 7-9 7-8 0-8-6 0-6 8-8 5-1 5-4z" fill="#fff" /></symbol>
      <symbol id="blueprint" viewBox="0 0 90 90"><rect width="90" height="90" rx="20" fill="url(#gStore)" /><rect x="5.500" y="5.500" width="79" height="79" rx="15" fill="none" stroke="#b9dcf8" stroke-width="1.600" /><circle cx="45" cy="45" r="37" fill="none" stroke="#7fb5ee" stroke-width="1" /><g stroke="#cfe6fa" stroke-width="8.500" stroke-linecap="round"><path d="M50 21L24 68M40 21l28 47M18 56h54" /></g><g stroke="#4388e0" stroke-width="5.500" stroke-linecap="round"><path d="M50 21L24 68M40 21l28 47M18 56h54" /></g></symbol>
      <symbol id="simulator" viewBox="0 0 90 90"><use href="#blueprint" width="90" height="90" /><rect x="48" y="22" width="34" height="72" rx="6" transform="rotate(26 65 58)" fill="#111214" /><path d="M57 46l11 23M54 56h19" stroke="#d5d8da" stroke-width="8" stroke-linecap="round" /></symbol>
      <symbol id="xcode" viewBox="0 0 90 90"><use href="#blueprint" width="90" height="90" /><path d="M57 35l9 4-24 52q-3 6-10 3-6-4-3-10z" fill="url(#gHammer)" /><path d="M70 10l10 5-14 24-9-4z" fill="#777c84" /><path d="M50-5q16-6 32 1l8 11 3 1 7 1q3 5 0 12l-4 10-8-3v-8l-7-3-7 4-9-3Q69 2 50-5z" fill="#33363c" /><path d="M54-6q15-3 27 4" fill="none" stroke="#8a8e95" stroke-width="1.500" /></symbol>
      <symbol id="postman" viewBox="0 0 90 90"><rect width="90" height="90" rx="20" fill="#ec7648" /><circle cx="66" cy="23" r="8" fill="#fff" /><path d="M56 28l8 6q-2 12-12 21-4 6-8 10L30 73l-7 7-6-2 8-6 1-4 14-16-8-2q6-16 24-22z" fill="#fff" /><path d="M36 49l20-16M42 52l18-17M65 19l2 8 5-6M36 46l8 8M30 73l-4-5" stroke="#ec7648" stroke-width="1.600" fill="none" /></symbol>
      <symbol id="safari" viewBox="0 0 90 90"><rect width="90" height="90" rx="20" fill="url(#gPaper)" /><circle cx="45" cy="45" r="39" fill="url(#gSafari)" /><path v-for="(a, i) in ticks(72)" :key="a" :transform="`rotate(${a} 45 45)`" :d="i % 2 ? 'M45 9v3.500' : 'M45 9v6'" stroke="#e5f0fb" stroke-width="1" /><path d="M73 22L49 49l-8-8z" fill="#e2443c" /><path d="M18 68l23-27 8 8z" fill="#f1f1f1" /></symbol>
      <symbol id="folder" viewBox="0 0 90 90"><path d="M8 4q0-4 4-4h22l6 6h39q4 0 4 4v20H8z" fill="#5fb2e4" /><path d="M14 0h42l20 24H14z" fill="#f5f5f5" /><path d="M56 0l20 24H60z" fill="#dcdcdc" /><path d="M41 0h12l-2 24h-8z" fill="#55585b" /><path d="M47 0v20" stroke="#c9cdd0" stroke-width="3" stroke-dasharray="2 2" /><path d="M-2 16q0-4 4-4h20q4 0 6 3l4 4q2 2 6 2h49q5 0 5 5v20H-2z" fill="#56a7dc" /><path d="M-2 30q0-5 5-5h84q5 0 5 5v54q0 6-6 6H4q-6 0-6-6z" fill="url(#gFolder)" /></symbol>
      <symbol id="trash" viewBox="0 0 90 90"><path d="M6 8L20-4l8 5 10-9 8 9 10-6 6 8 10-1 8 14-8 9H14z" fill="#eceeee" /><path d="M14 6l10-4 4 10zM40-4l6 10-8 2zM58 0l4 10 6-6zM30 8l10 4-8 4z" fill="#a0a5a8" /><path d="M26 8l10-2 2 6-9 2z" fill="#7ac26a" /><path d="M50 5l9-2 2 8-9 3z" fill="#3e5f9b" /><path d="M60 9l6-3 1 5z" fill="#c0563e" /><path d="M5 5q2 10 40 10T85 5l-9 80q-2 9-31 10-29-1-31-10z" fill="url(#gTrash)" opacity=".92" /><path d="M5 5q2 10 40 10T85 5" fill="none" stroke="#bfc3c4" stroke-width="1.500" /></symbol>
    </svg>

    <header class="menubar">
      <nav class="menus">
        <svg class="i32 apple"><use href="#apple" /></svg>
        <b>Opera</b>
        <span v-for="m in menus" :key="m">{{ m }}</span>
      </nav>
      <div class="status">
        <svg class="i28"><use href="#playing" /></svg>
        <span class="layout">LA</span>
        <svg class="bt"><use href="#bluetooth" /></svg>
        <span class="charge">100%<svg><use href="#charge" /></svg></span>
        <svg class="link"><use href="#link" /></svg>
        <svg class="i28"><use href="#timemachine" /></svg>
        <svg class="i28"><use href="#search" /></svg>
        <svg class="i28"><use href="#controls" /></svg>
        <svg class="i28"><use href="#siri" /></svg>
        <time class="clock"><span>Sun 10 Dec</span><span>1:31 p.m.</span></time>
      </div>
    </header>

    <div class="window">
      <aside class="sidebar">
        <div class="lights">
          <button class="light red" aria-label="Close"></button>
          <button class="light amber" aria-label="Minimise"></button>
          <button class="light green" aria-label="Zoom"></button>
        </div>
        <div v-for="(group, g) in sideGroups" :key="g" class="group">
          <button v-for="item in group" :key="item.icon" class="side" :aria-label="item.label">
            <svg class="i40"><use :href="'#' + item.icon" /></svg>
            <i v-if="item.badge" class="dot"></i>
          </button>
        </div>
        <button class="more" aria-label="More"><i></i><i></i><i></i></button>
      </aside>

      <div class="main">
        <div class="tabs">
          <button class="gx" aria-label="GX Corner"><svg><use href="#gamepad" /></svg></button>
          <button v-for="(t, i) in tabs" :key="i" class="tab">
            <svg class="i32" viewBox="0 0 32 32">
              <use :href="'#' + t.icon" width="32" height="32" />
              <text v-for="m in marks[t.icon]" :key="m.text" :x="m.x" :y="m.y" text-anchor="middle" :font-family="m.family" :font-size="m.size" :font-weight="m.weight" :fill="m.fill">{{ m.text }}</text>
            </svg>
            <span>{{ t.title }}</span>
          </button>
          <button class="tab active">
            <svg class="edge" viewBox="0 0 128 62" preserveAspectRatio="none"><path d="M1 62V13L13 1H124q3 0 3 3V62" fill="#0d0b1a" stroke="#a070fa" stroke-width="2" /></svg>
            <svg class="i32"><use href="#globe" /></svg>
            <span>Bitcoin</span>
          </button>
          <div class="tail">
            <button aria-label="New tab"><svg class="i24"><use href="#plus" /></svg></button>
            <button aria-label="Search tabs"><svg class="i28"><use href="#search" /></svg></button>
          </div>
        </div>

        <div class="toolbar">
          <div class="nav">
            <button aria-label="Back"><svg class="i28"><use href="#back" /></svg></button>
            <button class="off" aria-label="Forward"><svg class="i28"><use href="#forward" /></svg></button>
            <button aria-label="Reload"><svg class="i28"><use href="#reload" /></svg></button>
            <i class="grip"></i>
          </div>
          <div class="address">
            <svg class="warn"><use href="#warn" /></svg>
            <span class="insecure">Not Secure</span>
            <input value="143.244.191.15" aria-label="Address" />
          </div>
          <div class="tools near">
            <button v-for="t in addressTools" :key="t.label" :class="{ accent: t.accent }" :aria-label="t.label"><svg class="i28"><use :href="'#' + t.icon" /></svg></button>
          </div>
          <i class="grip"></i>
          <div class="tools far">
            <button v-for="t in browserTools" :key="t.label" :aria-label="t.label"><svg class="i32"><use :href="'#' + t.icon" /></svg></button>
          </div>
          <button class="avatar">R</button>
        </div>

        <main class="page">
          <h1>Bitcoin Value Fetcher</h1>
          <button class="get">Get it!</button>
          <p>12/10/2023 : 40662.23 €</p>
        </main>
      </div>
    </div>

    <footer class="dockbar">
      <div class="dock">
        <template v-for="(d, i) in dock" :key="i">
          <hr v-if="!d" />
          <button v-else class="app" :aria-label="d.label">
            <svg viewBox="0 0 90 90">
              <use :href="'#' + d.icon" width="90" height="90" />
              <text v-for="m in marks[d.icon]" :key="m.text" :x="m.x" :y="m.y" text-anchor="middle" :font-family="m.family" :font-size="m.size" :font-weight="m.weight" :fill="m.fill">{{ m.text }}</text>
            </svg>
            <span v-if="d.badge" class="badge">{{ d.badge }}</span>
            <i v-if="d.open" class="open"></i>
          </button>
        </template>
      </div>
    </footer>
  </div>
</template>

<style>
body {
  margin: 0;
}
symbol {
  overflow: visible;
}
</style>

<style scoped>
.desktop {
  min-height: 100vh;
  display: flex;
  flex-direction: column;
  box-sizing: border-box;
  font-family: Inter, sans-serif;
  color: #000;
  background:
    radial-gradient(ellipse 360px 30px at 400px 100%, #a0702c 0%, #6b5133 50%, transparent 100%),
    linear-gradient(90deg, #0b1c1d 0%, #14292b 8%, #1c3f42 40%, #1c4341 75%, #12312f 92%, #1d4746 97%, #17302e 100%);
  overflow: hidden;
}
.sprite {
  position: absolute;
}
svg {
  display: block;
  flex: none;
  overflow: visible;
}
button {
  padding: 0;
  border: 0;
  background: none;
  font: inherit;
  color: inherit;
  display: flex;
  align-items: center;
  justify-content: center;
}
.i24 { width: 24px; height: 24px; }
.i28 { width: 28px; height: 28px; }
.i32 { width: 32px; height: 32px; }
.i40 { width: 40px; height: 40px; }

.menubar {
  height: 73px;
  display: flex;
  align-items: center;
  justify-content: space-between;
  padding: 0 34px 4px 38px;
  box-sizing: border-box;
  font-size: 26px;
  background: linear-gradient(90deg, #d3d4d7 0%, #d9dcdf 15%, #dfe2ea 32%, #e0e4ec 45%, #d8dde5 58%, #cecfd1 66%, #ced2d8 69%, #bcc0c2 82%, #a8aaa8 100%);
}
.menus {
  display: flex;
  align-items: center;
  gap: 40px;
}
.menus b {
  margin-right: 4px;
  font-weight: 700;
}
.apple {
  margin-right: -2px;
}
.status {
  display: flex;
  align-items: center;
  gap: 40px;
  color: #1c1d1e;
}
.layout {
  width: 44px;
  height: 32px;
  box-sizing: border-box;
  border: 2px solid;
  border-radius: 6px;
  font-size: 22px;
  line-height: 28px;
  font-weight: 500;
  text-align: center;
}
.bt {
  width: 20px;
  height: 30px;
}
.charge {
  display: flex;
  align-items: center;
  gap: 10px;
  font-size: 22px;
}
.charge svg {
  width: 52px;
  height: 24px;
}
.link {
  width: 42px;
  height: 26px;
}
.clock {
  display: flex;
  gap: 16px;
  margin-left: -8px;
  font-size: 27px;
}

.window {
  flex: 1;
  display: flex;
  margin-top: 1px;
  border-top: 2px solid #55565a;
  border-left: 2px solid #3a3a3d;
  border-radius: 20px;
  overflow: hidden;
  background: #06050b;
}
.sidebar {
  width: 76px;
  flex: none;
  display: flex;
  flex-direction: column;
  padding-right: 2px;
  color: #9366e0;
  border-right: 2px solid transparent;
  border-image: linear-gradient(#06050b 72px, #a070fa 72px, #9366e0 20%, #4a3180 65%, #100c1c 88%) 1;
  border-width: 0 2px 0 0;
}
.lights {
  height: 159px;
  box-sizing: border-box;
  padding-top: 22px;
  display: flex;
  flex-direction: column;
  align-items: center;
  gap: 20px;
}
.light {
  width: 24px;
  height: 24px;
  border-radius: 50%;
}
.red { background: #ed6a5e; }
.amber { background: #f4bf4f; }
.green { background: #61c554; }
.group + .group::before {
  content: '';
  display: block;
  width: 24px;
  height: 2px;
  margin: 15px auto;
  background: currentColor;
}
.side {
  position: relative;
  width: 100%;
  height: 90px;
}
.dot {
  position: absolute;
  top: 21px;
  left: 45px;
  width: 12px;
  height: 12px;
  border: 3px solid #06050b;
  border-radius: 50%;
  background: #a070fa;
}
.more {
  flex: 1;
  margin-top: 3px;
  padding-top: 20px;
  border-top: 2px solid #4b4b4e;
  gap: 4px;
}
.more i {
  width: 6px;
  height: 6px;
  border-radius: 50%;
  background: currentColor;
}

.main {
  flex: 1;
  min-width: 0;
  display: flex;
  flex-direction: column;
}
.tabs {
  height: 72px;
  flex: none;
  display: flex;
  color: #a070fa;
  border-bottom: 2px solid;
  border-image: linear-gradient(90deg, #a070fa 94%, #0d0b1a 98%) 1;
  border-width: 0 0 2px;
}
.gx {
  width: 76px;
  padding: 12px 4px 0 0;
  box-sizing: border-box;
}
.gx svg {
  width: 28px;
  height: 24px;
}
.tab {
  position: relative;
  flex: 1;
  min-width: 0;
  justify-content: flex-start;
  gap: 6px;
  padding: 12px 10px 0;
  font-size: 22px;
  color: #d0d0d2;
}
.tab span {
  position: relative;
  width: 46px;
  overflow: hidden;
  white-space: nowrap;
  text-align: left;
  -webkit-mask-image: linear-gradient(90deg, #000 50%, transparent);
  mask-image: linear-gradient(90deg, #000 50%, transparent);
}
.tab.active {
  flex: none;
  width: 128px;
  padding: 12px 12px 0;
  box-sizing: border-box;
  color: #fff;
}
.active span {
  width: 64px;
}
.active .i32 {
  position: relative;
}
.edge {
  position: absolute;
  left: 0;
  bottom: -2px;
  width: 128px;
  height: 62px;
}
.tail {
  width: 180px;
  padding: 10px 26px 0 18px;
  box-sizing: border-box;
  display: flex;
  align-items: center;
  justify-content: space-between;
}

.toolbar {
  height: 72px;
  flex: none;
  display: flex;
  align-items: center;
  padding-right: 10px;
  background: #0d0b1a;
  color: #b6aadd;
  font-size: 27px;
}
.nav {
  display: flex;
  align-items: center;
  gap: 38px;
  padding-left: 24px;
}
.nav .grip {
  margin-left: -12px;
}
.off {
  opacity: .35;
}
.grip {
  width: 4px;
  height: 20px;
  background: repeating-linear-gradient(#231e3c 0 4px, transparent 4px 8px);
}
.address {
  flex: 1;
  display: flex;
  align-items: center;
  padding-left: 34px;
}
.warn {
  width: 28px;
  height: 26px;
}
.insecure {
  margin: 0 36px 0 12px;
}
.address input {
  flex: 1;
  padding: 0;
  border: 0;
  outline: 0;
  background: none;
  font: inherit;
  font-size: 29px;
  color: #fff;
}
.tools {
  display: flex;
  align-items: center;
}
.near {
  gap: 24px;
  margin-right: 18px;
}
.far {
  gap: 34px;
  margin: 0 22px 0 24px;
}
.accent {
  color: #a070fa;
}
.avatar {
  width: 56px;
  height: 56px;
  border-radius: 50%;
  background: #22559c;
  color: #fff;
  font-size: 28px;
}

.page {
  flex: 1;
  display: flex;
  flex-direction: column;
  align-items: center;
  background: #fff;
  font-family: 'Liberation Sans', sans-serif;
  position: relative;
}
.page::after {
  content: '';
  position: absolute;
  inset: auto 0 0;
  height: 90px;
  background: linear-gradient(transparent, rgba(0, 0, 0, .03) 45%, rgba(0, 0, 0, .11));
  -webkit-mask-image: linear-gradient(90deg, transparent, #000 6%, #000 92%, transparent 98%);
  mask-image: linear-gradient(90deg, transparent, #000 6%, #000 92%, transparent 98%);
}
h1 {
  margin: 55px 0 0;
  font-size: 60px;
  line-height: 70px;
}
.get {
  width: 98px;
  height: 40px;
  margin-top: 44px;
  border: 4px solid #2961c8;
  border-radius: 7px;
  background: #efefef;
  font-size: 25px;
}
.page p {
  margin: 31px 0 0;
  font-size: 31px;
  line-height: 36px;
}

.dockbar {
  display: flex;
  justify-content: center;
  padding: 8px 0 10px;
}
.dock {
  display: flex;
  gap: 29px;
  height: 142px;
  box-sizing: border-box;
  padding: 19px 18px 0 19px;
  border: 2px solid #4c6466;
  border-radius: 44px;
  background:
    radial-gradient(ellipse 420px 150px at 300px 100%, #4a412e, transparent),
    linear-gradient(90deg, #233436 0%, #233b40 20%, #234346 50%, #22433f 75%, #263e3b 100%);
}
.dock hr {
  width: 2px;
  height: 106px;
  margin: -3px 11px 0;
  border: 0;
  background: #5f7a79;
}
.app {
  position: relative;
  width: 90px;
  height: 90px;
}
.app svg {
  width: 90px;
  height: 90px;
}
.badge {
  position: absolute;
  top: -10px;
  right: -14px;
  width: 50px;
  height: 42px;
  border-radius: 21px;
  background: #e15241;
  color: #fff;
  font-size: 24px;
  line-height: 42px;
  text-align: center;
}
.open {
  position: absolute;
  left: 41px;
  top: 109px;
  width: 8px;
  height: 8px;
  border-radius: 50%;
  background: #9fbfbe;
}
</style>
